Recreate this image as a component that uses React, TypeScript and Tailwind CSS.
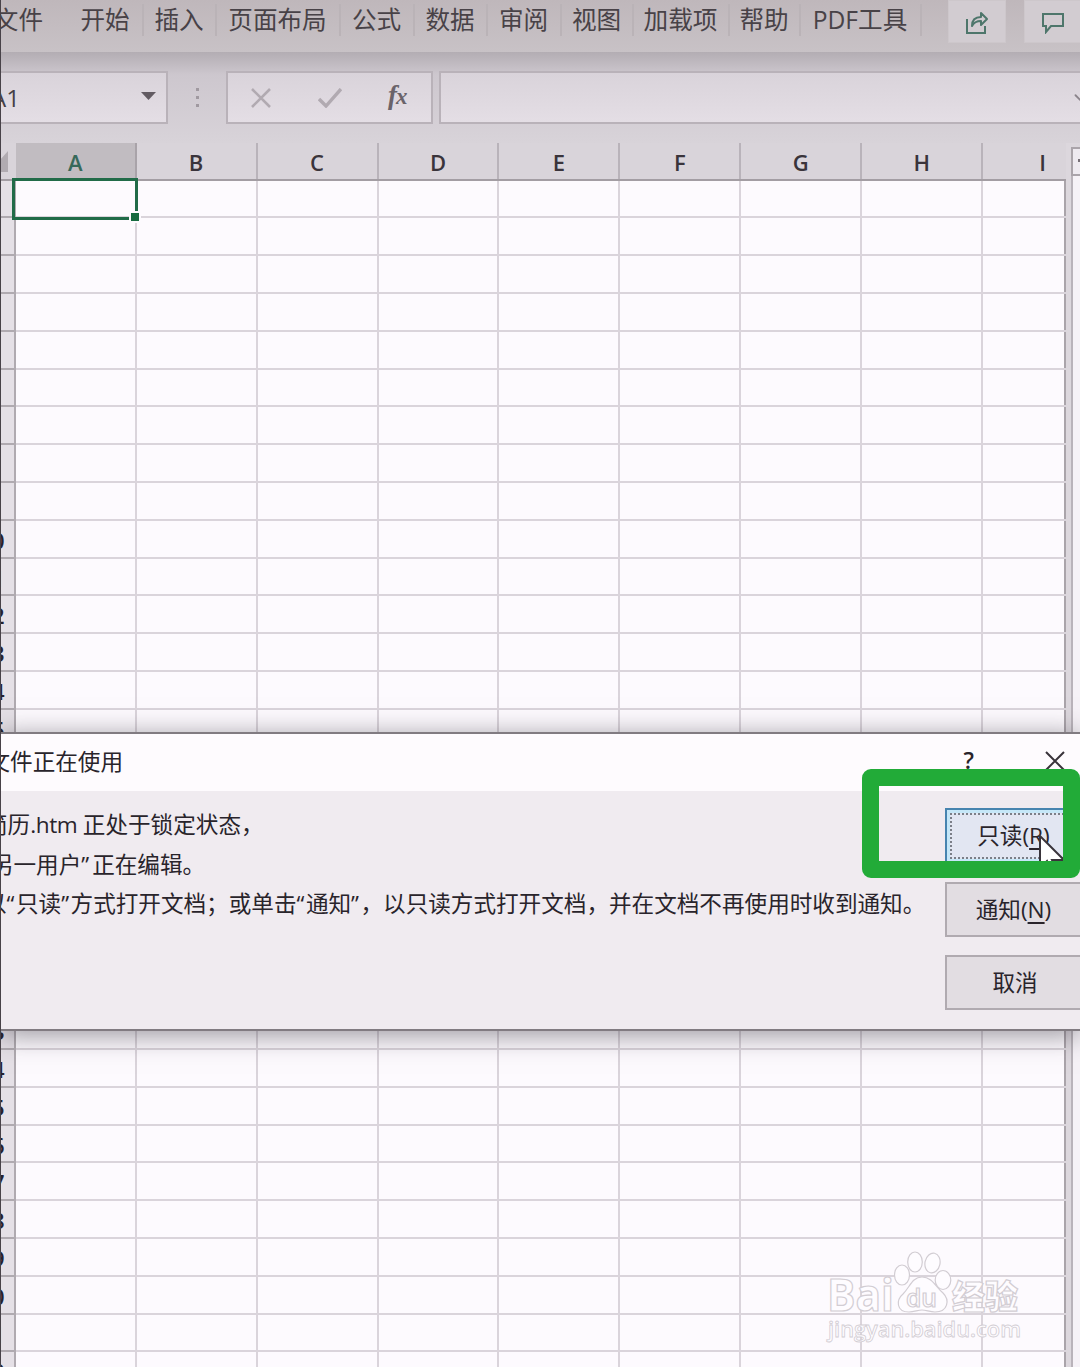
import { ChevronDown } from "lucide-react";

const tabs = [
  { label: "开始", width: "w-[75px]" },
  { label: "插入", width: "w-[73px]" },
  { label: "页面布局", width: "w-[124px]" },
  { label: "公式", width: "w-[74px]" },
  { label: "数据", width: "w-[73px]" },
  { label: "审阅", width: "w-[74px]" },
  { label: "视图", width: "w-[72px]" },
  { label: "加载项", width: "w-[96px]" },
  { label: "帮助", width: "w-[71px]" },
  { label: "PDF工具", width: "w-[121px]" },
];

const columns = ["A", "B", "C", "D", "E", "F", "G", "H", "I"];
const rows = Array.from({ length: 32 }, (_, i) => i + 1);

// Single digits and the rows behind the dialog have no visible number
const rowLabel = (n: number) => (n < 10 || (n > 15 && n < 23) ? "" : n);

const MenuBar = () => (
  <nav className="flex h-[52px] shrink-0 bg-gradient-to-b from-[#bfb7bb] to-[#c8c2c6] text-[24.6px] leading-[40px] text-[#484247]">
    <div className="flex w-[68px] shrink-0 justify-end pr-[25px] whitespace-nowrap">文件</div>
    {tabs.map((tab) => (
      <div key={tab.label} className={`flex h-[40px] shrink-0 justify-center whitespace-nowrap ${tab.width}`}>
        <span className="flex-1 text-center">{tab.label}</span>
        <span className="mt-1 -mr-px h-8 w-[2px] bg-[#bab3b7]" />
      </div>
    ))}
    <button className="ml-[27px] flex h-[43px] w-[58px] shrink-0 items-start border border-[#cdc7cb] bg-[#d2ccd1] pt-[11px] pl-[16px]">
      <svg width="24" height="24" viewBox="0 0 24 24" fill="none" stroke="#4e766b" strokeWidth="2">
        <path d="M2 7v14h18v-7" />
        <path d="M7 14c0-6 3-9 9-9V1l6 6-6 6V9c-4 0-7 1-9 5z" strokeLinejoin="round" />
      </svg>
    </button>
    <button className="ml-[18px] flex h-[43px] w-[62px] shrink-0 items-start border border-[#cdc7cb] bg-[#d2ccd1] pt-[11px] pl-[16px]">
      <svg width="24" height="22" viewBox="0 0 24 22" fill="none" stroke="#4e766b" strokeWidth="2">
        <path d="M2 2h20v12H10l-5 6v-6H2z" />
      </svg>
    </button>
  </nav>
);

const FormulaBar = () => (
  <div className="flex h-[91px] shrink-0 bg-gradient-to-b from-[#b3adb3] via-[#cdc7ce] via-25% to-[#d8d3d9] pt-[19px]">
    <div className="flex h-[53px] w-[168px] shrink-0 items-center border-2 border-l-0 border-[#b9b2b9] bg-gradient-to-b from-[#d9d3da] to-[#e4dee5]">
      <span className="-ml-[9px] flex-1 text-[24px] text-[#443f46]">A1</span>
      <svg className="mr-[10px] mb-[3px]" width="15" height="8" viewBox="0 0 15 8">
        <path d="M0 0h15L7.5 8z" fill="#625b62" />
      </svg>
    </div>
    <div className="flex w-[58px] shrink-0 flex-col items-center gap-[5px] pt-[17px]">
      <i className="h-[3px] w-[3px] bg-[#a099a0]" />
      <i className="h-[3px] w-[3px] bg-[#a099a0]" />
      <i className="h-[3px] w-[3px] bg-[#a099a0]" />
    </div>
    <div className="flex h-[53px] w-[207px] shrink-0 items-center border-2 border-[#b9b2b9] bg-gradient-to-b from-[#d9d3da] to-[#e4dee5] pl-[23px]">
      <svg width="20" height="20" viewBox="0 0 20 20" stroke="#b1aab1" strokeWidth="2.6" fill="none">
        <path d="M1 1l18 18M19 1L1 19" />
      </svg>
      <svg className="ml-[47px]" width="24" height="20" viewBox="0 0 24 20" stroke="#b1aab1" fill="none">
        <path d="M1 11l7 7L23 1" strokeWidth="3.4" />
      </svg>
      <span className="ml-[46px] pb-1 font-['Liberation_Serif',serif] text-[27px] font-bold text-[#6a636a] italic">
        f<span className="-ml-px text-[23px]">x</span>
      </span>
    </div>
    <div className="ml-[6px] flex h-[53px] w-[660px] shrink-0 items-center justify-end border-2 border-[#b9b2b9] bg-gradient-to-b from-[#d9d3da] to-[#e4dee5]">
      <ChevronDown className="mr-[5px] h-[22px] w-[22px] text-[#8b848b]" />
    </div>
  </div>
);

const ColumnHeader = () => (
  <div className="flex h-[37.6px] shrink-0 border-b-2 border-[#a39da3] bg-[#d9d4da] text-[22px] leading-[38px] font-semibold text-[#3a343b]">
    <div className="flex w-[15.7px] shrink-0 items-end pb-[7px]">
      <svg width="8" height="21" viewBox="0 0 8 21">
        <path d="M8 0v21H0V9z" fill="#b1abb1" />
      </svg>
    </div>
    {columns.map((name, i) => (
      <div
        key={name}
        className={`w-[120.95px] shrink-0 border-r-2 text-center ${
          i === 0 ? "border-[#a9a3a9] bg-[#c1bcc1] text-[#37695a]" : "border-[#b9b3ba]"
        }`}
      >
        {name}
      </div>
    ))}
  </div>
);

const Sheet = () => (
  <div className="flex shrink-0">
    <div className="w-[1066px] shrink-0 overflow-hidden">
      <ColumnHeader />
      <div className="border-r-2 border-[#aaa4aa] bg-[#fdfafe]">
        {rows.map((n) => (
          <div key={n} className="flex h-[37.8px]">
            <div className="flex w-[15.7px] shrink-0 justify-end border-r-2 border-b-2 border-[#b0aab0] bg-[#e5e0e6] pr-[9px] text-[22px] leading-[38px] font-semibold text-[#27222d]">
              {rowLabel(n)}
            </div>
            {columns.map((name) => (
              <div key={name} className="w-[120.95px] shrink-0 border-r-2 border-b-2 border-[#dad4db]" />
            ))}
          </div>
        ))}
      </div>
    </div>
    <div className="w-[14px] bg-[#dcd7dd] pl-[5px]">
      <div className="mt-[4px] h-[29px] border-2 border-r-0 border-[#aaa4aa] bg-[#eeeaf0] pt-[10px] pl-[5px]">
        <div className="h-[3px] w-[3px] bg-[#777077]" />
      </div>
      <div className="h-full border-l-2 border-[#b9b3ba] bg-[#f6f2f7]" />
    </div>
  </div>
);

const LockedFileDialog = () => (
  <div className="absolute top-[732px] left-0 h-[299px] w-full overflow-hidden border-y-2 border-[#817b81] bg-[#f0ebf0] text-[22.6px] text-[#29242b] shadow-[0_4px_26px_rgba(50,45,55,0.5)]">
    <header className="flex h-[57px] items-center bg-[#fefbfe]">
      <span className="-ml-[12.5px] w-[976px] shrink-0 pb-[2px] whitespace-nowrap">文件正在使用</span>
      <span className="-mt-1 w-[81px] shrink-0 text-[23px] font-semibold">?</span>
      <svg className="-mt-1 shrink-0" width="20" height="20" viewBox="0 0 20 20" stroke="#39333a" strokeWidth="2">
        <path d="M1 1l18 18M19 1L1 19" />
      </svg>
    </header>
    <div className="flex">
      <div className="w-[945px] shrink-0 pt-[14px] leading-[39.5px] whitespace-nowrap">
        <p className="-ml-[15px]">
          简历<span className="tracking-[-0.4px]">.htm </span>正处于锁定状态，
        </p>
        <p className="-ml-[17px]">
          “另一用户<span className="tracking-[3px]">”</span>正在编辑。
        </p>
        <p className="-ml-[16px]">
          以<span className="tracking-[1.5px]">“</span>只读<span className="tracking-[1.5px]">”</span>
          方式打开文档；或单击<span className="tracking-[1.5px]">“</span>通知
          <span className="tracking-[1.5px]">”</span>
          ，以只读方式打开文档，并在文档不再使用时收到通知。
        </p>
      </div>
      <div className="flex shrink-0 flex-col gap-[18px] pt-[17px]">
        <button className="h-[56px] w-[140px] border-2 border-[#4784af] bg-[#c5e7f8] p-[3px]">
          <span className="flex h-full items-center justify-center border-2 border-dotted border-[#7b7f88] bg-[#e2e6f2] pr-[3px]">
            只读(<u className="underline-offset-4">R</u>)
          </span>
        </button>
        <button className="h-[55px] w-[140px] border-2 border-[#b0aab0] bg-[#e2dde2] pr-[3px]">
          通知(<u className="underline-offset-4">N</u>)
        </button>
        <button className="h-[55px] w-[140px] border-2 border-[#b0aab0] bg-[#e2dde2]">取消</button>
      </div>
    </div>
  </div>
);

const Watermark = () => (
  <svg
    className="absolute top-[1246px] left-[822px]"
    width="210"
    height="102"
    viewBox="0 0 210 102"
    fill="#fefcff"
    stroke="#d2cdd3"
    strokeWidth="1.2"
  >
    <text x="5" y="65" fontSize="44" fontWeight="700" textLength="67" lengthAdjust="spacingAndGlyphs" className="font-['Open_Sans',sans-serif]">
      Bai
    </text>
    <ellipse cx="80" cy="29" rx="7.5" ry="10" />
    <ellipse cx="93" cy="16" rx="7.3" ry="10" />
    <ellipse cx="110.5" cy="17" rx="7.5" ry="10" transform="rotate(12 110.5 17)" />
    <ellipse cx="121" cy="34" rx="7.8" ry="9.5" />
    <path d="M100 31c-10 0-12 10-19 17-7 6-7 18 6 18 5 0 9-2 13-2s8 2 13 2c13 0 15-12 8-19-7-6-11-16-21-16z" />
    <text x="84" y="61" fontSize="25" fontWeight="600" textLength="31" lengthAdjust="spacingAndGlyphs" className="font-['Open_Sans',sans-serif]">
      du
    </text>
    <text x="130" y="63" fontSize="33" fontWeight="900" textLength="66" lengthAdjust="spacingAndGlyphs" className="font-['Noto_Sans_CJK_SC',sans-serif]">
      经验
    </text>
    <text x="6" y="91" fontSize="22" fontWeight="600" strokeWidth="0.8" textLength="193" lengthAdjust="spacingAndGlyphs" className="font-['Open_Sans',sans-serif]">
      jingyan.baidu.com
    </text>
  </svg>
);

export default function App() {
  return (
    <main className="relative flex h-[1367px] w-[1080px] flex-col overflow-hidden bg-[#fdfafe] font-['Open_Sans','Noto_Sans_CJK_SC',sans-serif]">
      <MenuBar />
      <FormulaBar />
      <Sheet />

      {/* Active cell outline and fill handle */}
      <div className="absolute top-[178px] left-[12px] h-[42px] w-[126px] border-[3px] border-[#216b48]" />
      <div className="absolute top-[211px] left-[129px] h-[12px] w-[12px] border-2 border-[#fdfafe] bg-[#176b40]" />

      <LockedFileDialog />

      <svg className="absolute top-[835px] left-[1039px]" width="26" height="40" viewBox="0 0 26 40">
        <path d="M1 1v32l7-7 5 12 5-2-5-11h12z" fill="#fff" stroke="#39343b" strokeWidth="2" />
      </svg>

      {/* Highlight around the read-only button */}
      <div className="absolute top-[769px] left-[862px] h-[109px] w-[218px] rounded-[9px] border-[17.5px] border-[#22ab38]" />

      <Watermark />
      <div className="absolute top-0 left-0 h-full w-px bg-[#484248]" />
    </main>
  );
}
